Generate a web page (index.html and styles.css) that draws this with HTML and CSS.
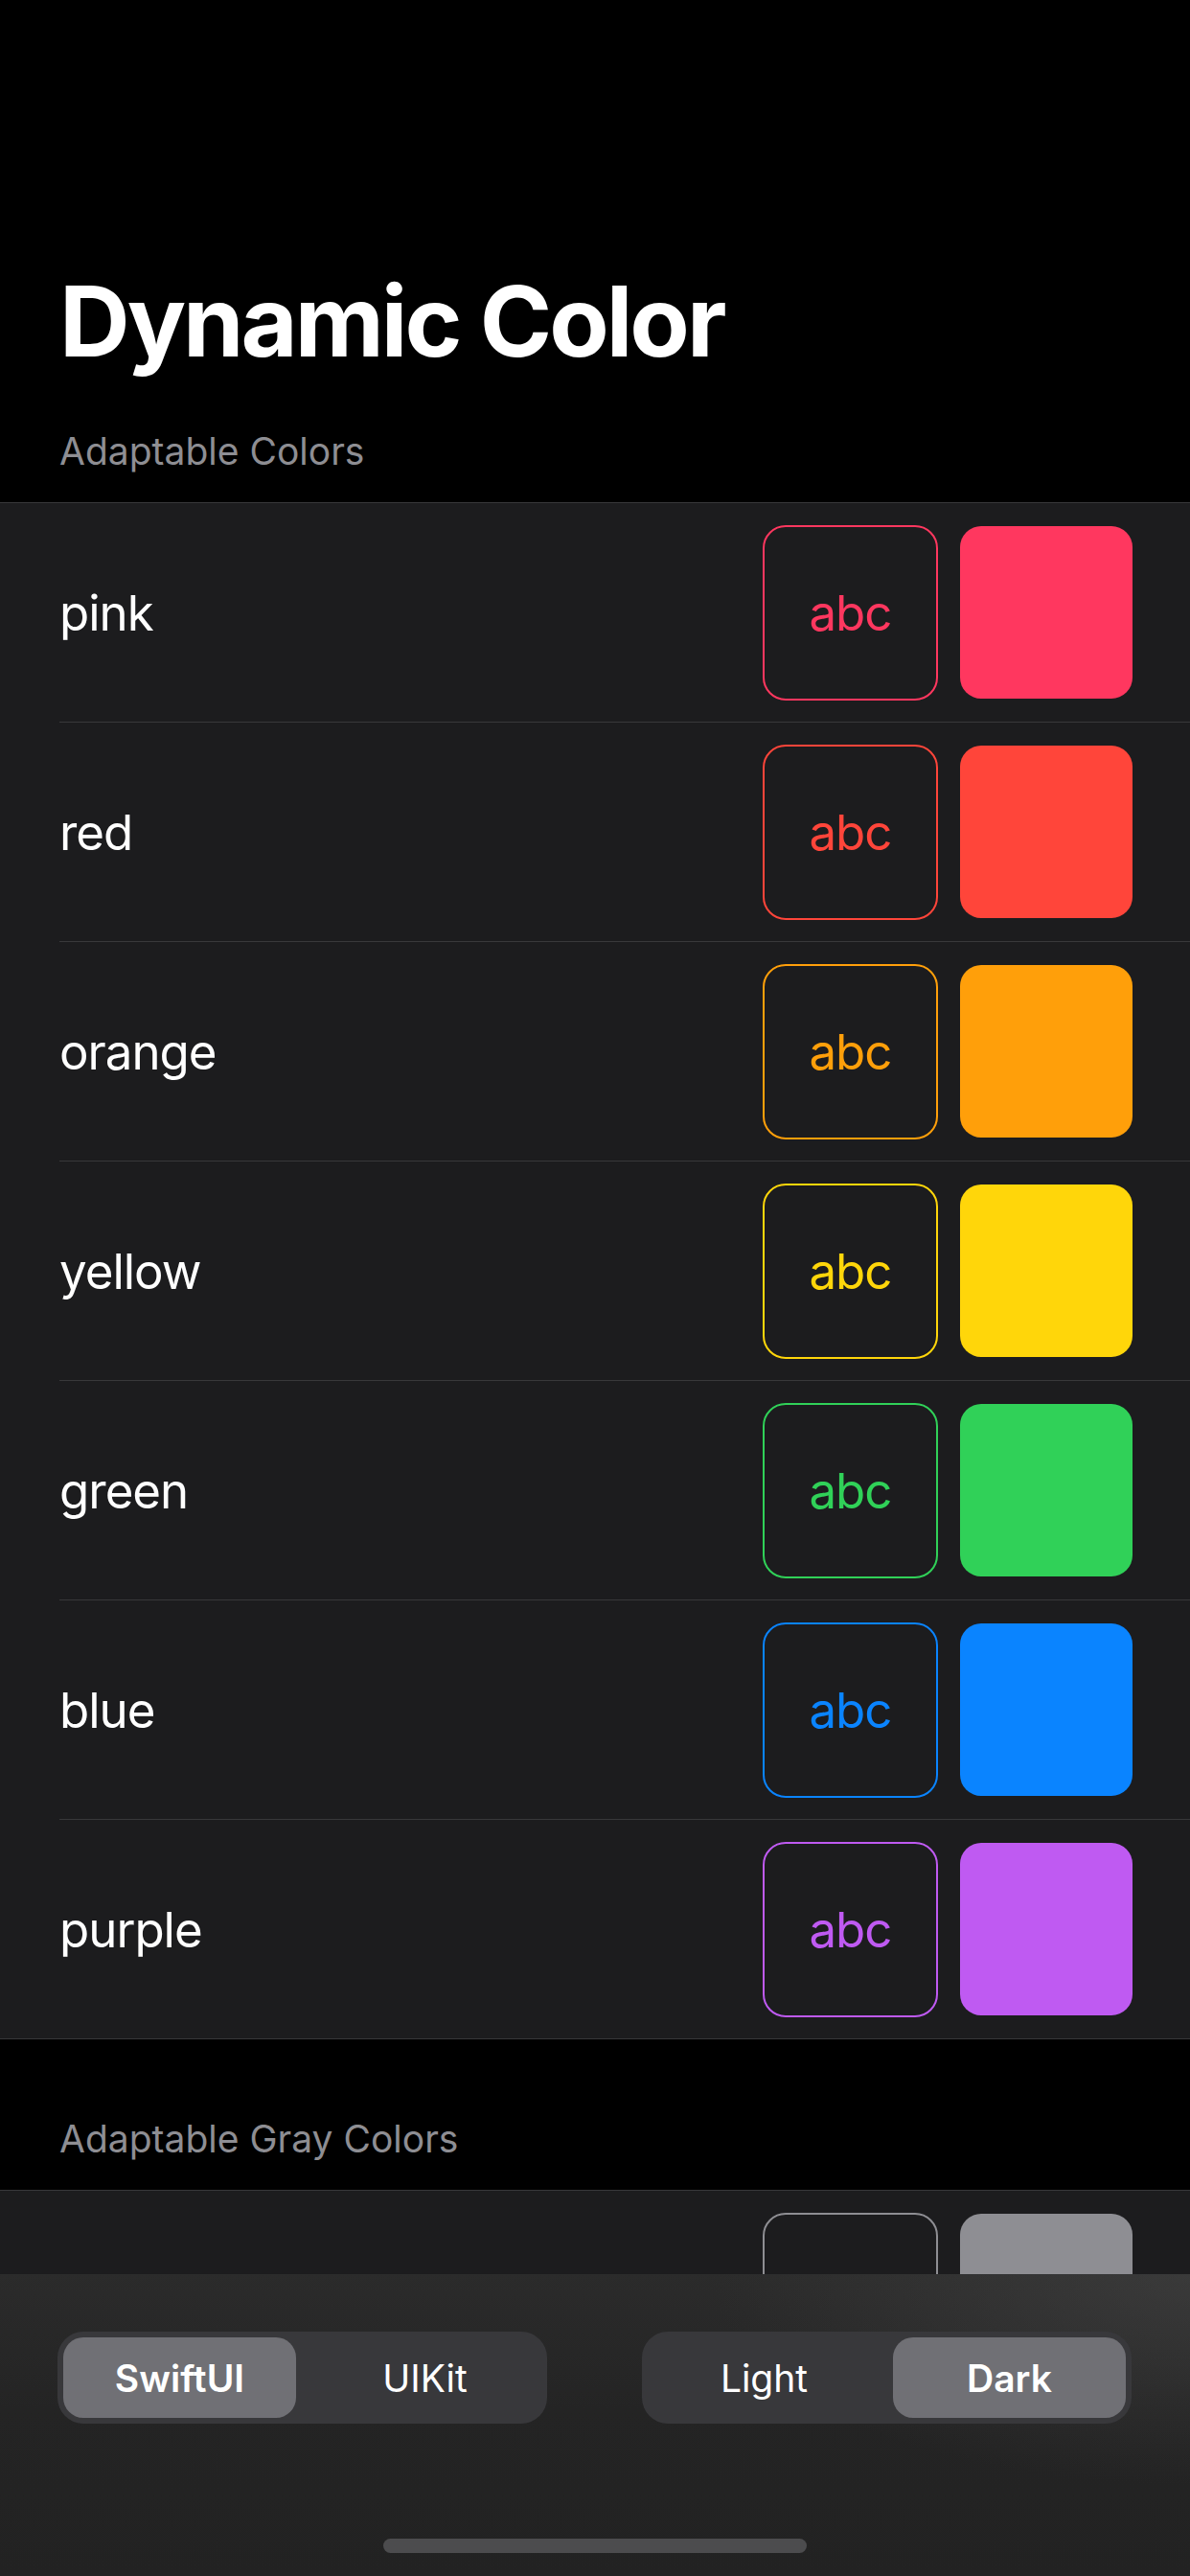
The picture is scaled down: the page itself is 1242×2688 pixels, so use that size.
FILE: index.html
```html
<!DOCTYPE html>
<html lang="en">
<head>
    <meta charset="UTF-8">
    <meta name="viewport" content="width=device-width, initial-scale=1.0">
    <title>Dynamic Color</title>
    <link rel="stylesheet" href="styles.css">
</head>
<body>

    <div class="page">
        <h1 class="nav-title">Dynamic Color</h1>

        <div class="section-header">Adaptable Colors</div>
        <div class="list">
            <div class="row">
                <div class="row-inner">
                    <span class="label">pink</span>
                    <div class="text-box pink">abc</div>
                    <div class="fill-box pink"></div>
                </div>
            </div>
            <div class="row">
                <div class="row-inner">
                    <span class="label">red</span>
                    <div class="text-box red">abc</div>
                    <div class="fill-box red"></div>
                </div>
            </div>
            <div class="row">
                <div class="row-inner">
                    <span class="label">orange</span>
                    <div class="text-box orange">abc</div>
                    <div class="fill-box orange"></div>
                </div>
            </div>
            <div class="row">
                <div class="row-inner">
                    <span class="label">yellow</span>
                    <div class="text-box yellow">abc</div>
                    <div class="fill-box yellow"></div>
                </div>
            </div>
            <div class="row">
                <div class="row-inner">
                    <span class="label">green</span>
                    <div class="text-box green">abc</div>
                    <div class="fill-box green"></div>
                </div>
            </div>
            <div class="row">
                <div class="row-inner">
                    <span class="label">blue</span>
                    <div class="text-box blue">abc</div>
                    <div class="fill-box blue"></div>
                </div>
            </div>
            <div class="row">
                <div class="row-inner">
                    <span class="label">purple</span>
                    <div class="text-box purple">abc</div>
                    <div class="fill-box purple"></div>
                </div>
            </div>
        </div>

        <div class="section-header gap">Adaptable Gray Colors</div>
        <div class="list">
            <div class="row">
                <div class="row-inner">
                    <span class="label">gray</span>
                    <div class="text-box gray">abc</div>
                    <div class="fill-box gray"></div>
                </div>
            </div>
            <div class="row">
                <div class="row-inner">
                    <span class="label">gray2</span>
                    <div class="text-box gray2">abc</div>
                    <div class="fill-box gray2"></div>
                </div>
            </div>
        </div>
    </div>

    <!-- Bottom toolbar -->
    <div class="toolbar">
        <div class="controls">
            <div class="segmented">
                <div class="segment selected">SwiftUI</div>
                <div class="segment">UIKit</div>
            </div>
            <div class="segmented">
                <div class="segment">Light</div>
                <div class="segment selected">Dark</div>
            </div>
        </div>
        <div class="home-indicator"></div>
    </div>

</body>
</html>
```

FILE: styles.css
```css
* {
    margin: 0;
    padding: 0;
    box-sizing: border-box;
    font-family: 'Inter', 'Roboto', sans-serif;
}

body {
    background-color: #000;
    color: #fff;
    height: 2688px;
    overflow: hidden;
    position: relative;
}

.nav-title {
    font-size: 102px;
    line-height: 122px;
    font-weight: 700;
    letter-spacing: -3px;
    padding: 274px 0 0 62px;
}

.section-header {
    font-size: 39px;
    line-height: 47px;
    color: #8e8e93;
    padding: 51px 0 30px 62px;
}

.section-header.gap {
    padding-top: 80px;
}

.list {
    background-color: #1c1c1e;
    border-top: 1px solid #38383a;
    border-bottom: 1px solid #38383a;
}

.row {
    padding-left: 62px;
}

.row-inner {
    display: flex;
    align-items: center;
    height: 229px;
    padding-right: 60px;
    border-top: 1px solid #38383a;
}

.row:first-child .row-inner {
    height: 228px;
    border-top: none;
}

.label {
    flex: 1;
    font-size: 51px;
    letter-spacing: -1px;
}

.text-box {
    width: 183px;
    height: 183px;
    border: 2px solid currentColor;
    border-radius: 24px;
    display: flex;
    justify-content: center;
    align-items: center;
    font-size: 51px;
    letter-spacing: -1px;
    margin-right: 23px;
}

.fill-box {
    width: 180px;
    height: 180px;
    border-radius: 22px;
    background-color: currentColor;
}

.pink { color: #ff375f; }
.red { color: #ff453a; }
.orange { color: #ff9f0a; }
.yellow { color: #ffd60a; }
.green { color: #30d158; }
.blue { color: #0a84ff; }
.purple { color: #bf5af2; }
.gray { color: #8e8e93; }
.gray2 { color: #636366; }

/* Toolbar */
.toolbar {
    position: absolute;
    left: 0;
    right: 0;
    bottom: 0;
    height: 315px;
    display: flex;
    flex-direction: column;
    align-items: center;
    padding-top: 60px;
    background: radial-gradient(ellipse 500px 220px at 100% 0%, rgba(70, 70, 70, 0.55), rgba(70, 70, 70, 0)),
                linear-gradient(#2b2b2b, #242424 45%, #222 100%);
}

.controls {
    width: 100%;
    display: flex;
    justify-content: space-between;
    padding: 0 61px 0 60px;
}

.segmented {
    width: 511px;
    height: 96px;
    display: flex;
    gap: 13px;
    padding: 6px;
    background-color: #38383b;
    border-radius: 27px;
}

.segment {
    flex: 1;
    display: flex;
    justify-content: center;
    align-items: center;
    font-size: 39px;
    font-weight: 400;
    color: #fff;
    border-radius: 21px;
}

.segment.selected {
    background-color: #707075;
    font-weight: 600;
}

.home-indicator {
    width: 442px;
    height: 15px;
    margin-top: 120px;
    border-radius: 8px;
    background-color: #4c4c4e;
}
```
